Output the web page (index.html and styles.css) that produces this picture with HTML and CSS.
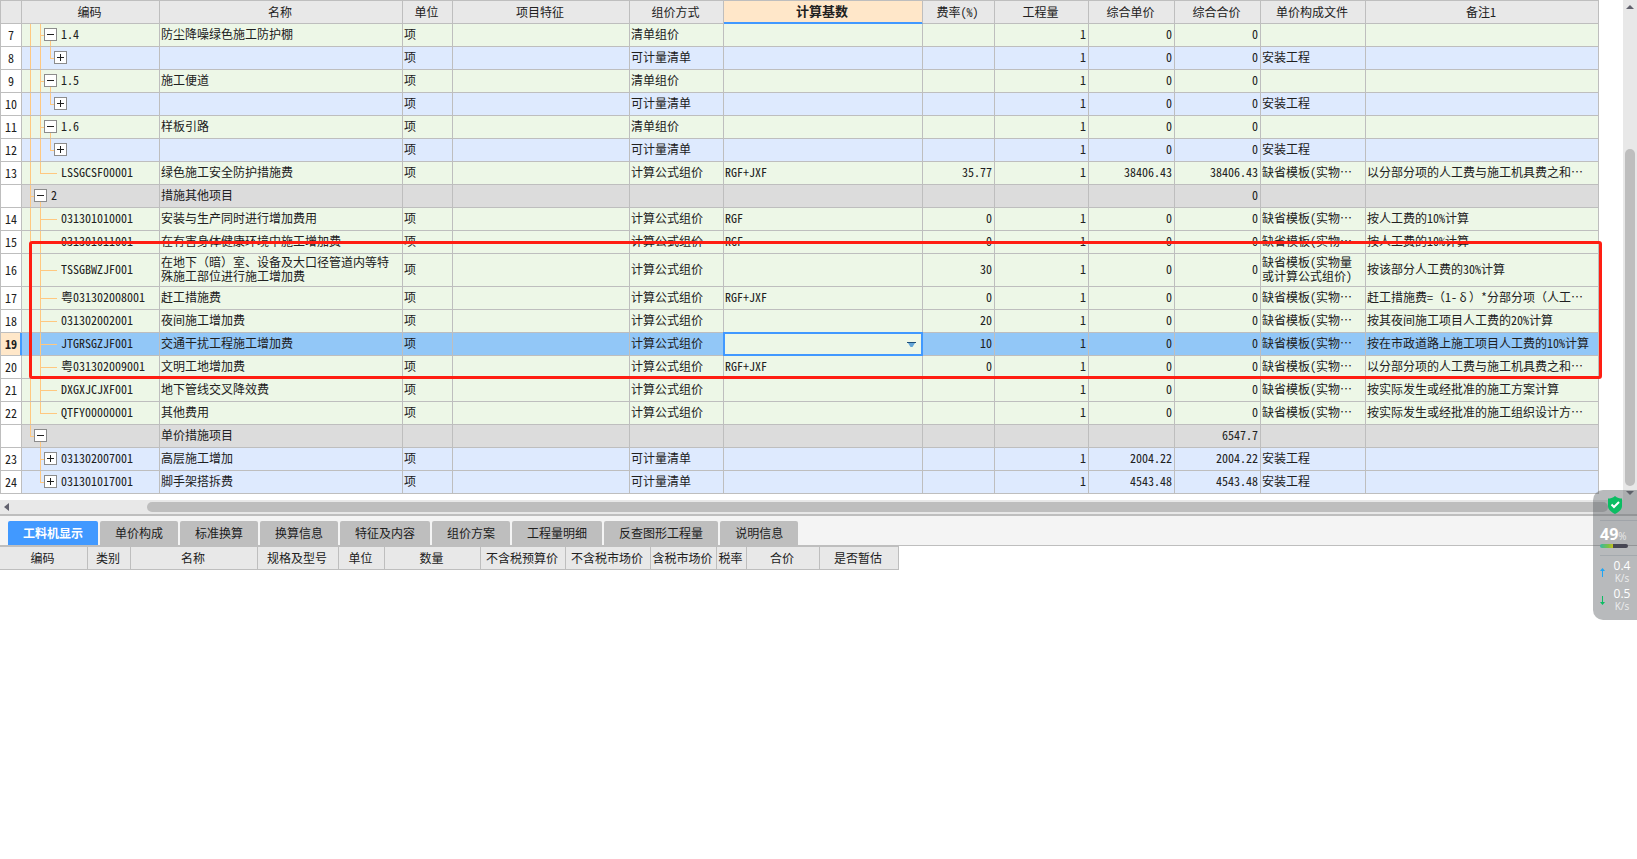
FILE: index.html
```html
<!DOCTYPE html>
<html lang="zh-CN">
<head>
<meta charset="utf-8">
<title>措施项目</title>
<link rel="stylesheet" href="styles.css">
</head>
<body>
<main class="app">
  <section class="upper">
    <div class="sheet">
      <div class="grid-wrap">
        <table class="grid">
          <colgroup>
            <col class="c-no"><col class="c-code"><col class="c-name"><col class="c-unit"><col class="c-feature"><col class="c-mode"><col class="c-base"><col class="c-rate"><col class="c-qty"><col class="c-price"><col class="c-price"><col class="c-file"><col class="c-note">
          </colgroup>
          <thead>
            <tr><th></th><th>编码</th><th>名称</th><th>单位</th><th>项目特征</th><th>组价方式</th><th class="current">计算基数</th><th>费率(%)</th><th>工程量</th><th>综合单价</th><th>综合合价</th><th>单价构成文件</th><th>备注1</th></tr>
          </thead>
          <tbody>
            <tr class="green"><th>7</th><td class="code"><div class="tree"><i class="line"></i><i class="tee"></i><span class="node open"><button class="toggle minus" aria-label="折叠"></button></span><span class="label">1.4</span></div></td><td>防尘降噪绿色施工防护棚</td><td>项</td><td></td><td>清单组价</td><td></td><td class="num"></td><td class="num">1</td><td class="num">0</td><td class="num">0</td><td></td><td></td></tr>
            <tr class="blue"><th>8</th><td class="code"><div class="tree"><i class="line"></i><i class="line"></i><i class="end"></i><span class="node"><button class="toggle plus" aria-label="展开"></button></span></div></td><td></td><td>项</td><td></td><td>可计量清单</td><td></td><td class="num"></td><td class="num">1</td><td class="num">0</td><td class="num">0</td><td>安装工程</td><td></td></tr>
            <tr class="green"><th>9</th><td class="code"><div class="tree"><i class="line"></i><i class="tee"></i><span class="node open"><button class="toggle minus" aria-label="折叠"></button></span><span class="label">1.5</span></div></td><td>施工便道</td><td>项</td><td></td><td>清单组价</td><td></td><td class="num"></td><td class="num">1</td><td class="num">0</td><td class="num">0</td><td></td><td></td></tr>
            <tr class="blue"><th>10</th><td class="code"><div class="tree"><i class="line"></i><i class="line"></i><i class="end"></i><span class="node"><button class="toggle plus" aria-label="展开"></button></span></div></td><td></td><td>项</td><td></td><td>可计量清单</td><td></td><td class="num"></td><td class="num">1</td><td class="num">0</td><td class="num">0</td><td>安装工程</td><td></td></tr>
            <tr class="green"><th>11</th><td class="code"><div class="tree"><i class="line"></i><i class="tee"></i><span class="node open"><button class="toggle minus" aria-label="折叠"></button></span><span class="label">1.6</span></div></td><td>样板引路</td><td>项</td><td></td><td>清单组价</td><td></td><td class="num"></td><td class="num">1</td><td class="num">0</td><td class="num">0</td><td></td><td></td></tr>
            <tr class="blue"><th>12</th><td class="code"><div class="tree"><i class="line"></i><i class="line"></i><i class="end"></i><span class="node"><button class="toggle plus" aria-label="展开"></button></span></div></td><td></td><td>项</td><td></td><td>可计量清单</td><td></td><td class="num"></td><td class="num">1</td><td class="num">0</td><td class="num">0</td><td>安装工程</td><td></td></tr>
            <tr class="green"><th>13</th><td class="code"><div class="tree"><i class="line"></i><i class="end"></i><span class="node leaf"></span><span class="label">LSSGCSF00001</span></div></td><td>绿色施工安全防护措施费</td><td>项</td><td></td><td>计算公式组价</td><td>RGF+JXF</td><td class="num">35.77</td><td class="num">1</td><td class="num">38406.43</td><td class="num">38406.43</td><td>缺省模板(实物…</td><td>以分部分项的人工费与施工机具费之和…</td></tr>
            <tr class="gray"><th></th><td class="code"><div class="tree"><i class="tee"></i><span class="node open"><button class="toggle minus" aria-label="折叠"></button></span><span class="label">2</span></div></td><td>措施其他项目</td><td></td><td></td><td></td><td></td><td class="num"></td><td class="num"></td><td class="num"></td><td class="num">0</td><td></td><td></td></tr>
            <tr class="green"><th>14</th><td class="code"><div class="tree"><i class="line"></i><i class="tee"></i><span class="node leaf"></span><span class="label">031301010001</span></div></td><td>安装与生产同时进行增加费用</td><td>项</td><td></td><td>计算公式组价</td><td>RGF</td><td class="num">0</td><td class="num">1</td><td class="num">0</td><td class="num">0</td><td>缺省模板(实物…</td><td>按人工费的10%计算</td></tr>
            <tr class="green"><th>15</th><td class="code"><div class="tree"><i class="line"></i><i class="tee"></i><span class="node leaf"></span><span class="label">031301011001</span></div></td><td>在有害身体健康环境中施工增加费</td><td>项</td><td></td><td>计算公式组价</td><td>RGF</td><td class="num">0</td><td class="num">1</td><td class="num">0</td><td class="num">0</td><td>缺省模板(实物…</td><td>按人工费的10%计算</td></tr>
            <tr class="green tall"><th>16</th><td class="code"><div class="tree"><i class="line"></i><i class="tee"></i><span class="node leaf"></span><span class="label">TSSGBWZJF001</span></div></td><td>在地下（暗）室、设备及大口径管道内等特<br>殊施工部位进行施工增加费</td><td>项</td><td></td><td>计算公式组价</td><td></td><td class="num">30</td><td class="num">1</td><td class="num">0</td><td class="num">0</td><td>缺省模板(实物量<br>或计算公式组价)</td><td>按该部分人工费的30%计算</td></tr>
            <tr class="green"><th>17</th><td class="code"><div class="tree"><i class="line"></i><i class="tee"></i><span class="node leaf"></span><span class="label">粤031302008001</span></div></td><td>赶工措施费</td><td>项</td><td></td><td>计算公式组价</td><td>RGF+JXF</td><td class="num">0</td><td class="num">1</td><td class="num">0</td><td class="num">0</td><td>缺省模板(实物…</td><td>赶工措施费=（1-<span class="wide">δ</span>）*分部分项（人工…</td></tr>
            <tr class="green"><th>18</th><td class="code"><div class="tree"><i class="line"></i><i class="tee"></i><span class="node leaf"></span><span class="label">031302002001</span></div></td><td>夜间施工增加费</td><td>项</td><td></td><td>计算公式组价</td><td></td><td class="num">20</td><td class="num">1</td><td class="num">0</td><td class="num">0</td><td>缺省模板(实物…</td><td>按其夜间施工项目人工费的20%计算</td></tr>
            <tr class="selected"><th>19</th><td class="code"><div class="tree"><i class="line"></i><i class="tee"></i><span class="node leaf"></span><span class="label">JTGRSGZJF001</span></div></td><td>交通干扰工程施工增加费</td><td>项</td><td></td><td>计算公式组价</td><td class="editing"><div class="combo"><select aria-label="计算基数"><option></option><option>RGF</option><option>RGF+JXF</option></select><svg class="combo-arrow" viewBox="0 0 9 6" width="9" height="6"><path d="M0 0h9v1H0z" fill="#1d4e79"/><path d="M1 1h7L5.500 5h-2z" fill="#62a5d8"/></svg></div></td><td class="num">10</td><td class="num">1</td><td class="num">0</td><td class="num">0</td><td>缺省模板(实物…</td><td>按在市政道路上施工项目人工费的10%计算</td></tr>
            <tr class="green"><th>20</th><td class="code"><div class="tree"><i class="line"></i><i class="tee"></i><span class="node leaf"></span><span class="label">粤031302009001</span></div></td><td>文明工地增加费</td><td>项</td><td></td><td>计算公式组价</td><td>RGF+JXF</td><td class="num">0</td><td class="num">1</td><td class="num">0</td><td class="num">0</td><td>缺省模板(实物…</td><td>以分部分项的人工费与施工机具费之和…</td></tr>
            <tr class="green"><th>21</th><td class="code"><div class="tree"><i class="line"></i><i class="tee"></i><span class="node leaf"></span><span class="label">DXGXJCJXF001</span></div></td><td>地下管线交叉降效费</td><td>项</td><td></td><td>计算公式组价</td><td></td><td class="num"></td><td class="num">1</td><td class="num">0</td><td class="num">0</td><td>缺省模板(实物…</td><td>按实际发生或经批准的施工方案计算</td></tr>
            <tr class="green"><th>22</th><td class="code"><div class="tree"><i class="line"></i><i class="end"></i><span class="node leaf"></span><span class="label">QTFY00000001</span></div></td><td>其他费用</td><td>项</td><td></td><td>计算公式组价</td><td></td><td class="num"></td><td class="num">1</td><td class="num">0</td><td class="num">0</td><td>缺省模板(实物…</td><td>按实际发生或经批准的施工组织设计方…</td></tr>
            <tr class="gray"><th></th><td class="code"><div class="tree"><i class="end"></i><span class="node open"><button class="toggle minus" aria-label="折叠"></button></span></div></td><td>单价措施项目</td><td></td><td></td><td></td><td></td><td class="num"></td><td class="num"></td><td class="num"></td><td class="num">6547.7</td><td></td><td></td></tr>
            <tr class="blue"><th>23</th><td class="code"><div class="tree"><i></i><i class="tee"></i><span class="node"><button class="toggle plus" aria-label="展开"></button></span><span class="label">031302007001</span></div></td><td>高层施工增加</td><td>项</td><td></td><td>可计量清单</td><td></td><td class="num"></td><td class="num">1</td><td class="num">2004.22</td><td class="num">2004.22</td><td>安装工程</td><td></td></tr>
            <tr class="blue"><th>24</th><td class="code"><div class="tree"><i></i><i class="end"></i><span class="node"><button class="toggle plus" aria-label="展开"></button></span><span class="label">031301017001</span></div></td><td>脚手架搭拆费</td><td>项</td><td></td><td>可计量清单</td><td></td><td class="num"></td><td class="num">1</td><td class="num">4543.48</td><td class="num">4543.48</td><td>安装工程</td><td></td></tr>
          </tbody>
        </table>
        <div class="marker"></div>
      </div>
      <div class="hscroll">
        <svg viewBox="0 0 5 8" width="5" height="8"><path d="M5 0v8L0 4z" fill="#62626e"/></svg>
        <div class="thumb"></div>
        <svg viewBox="0 0 5 8" width="5" height="8"><path d="M0 0v8l5-4z" fill="#62626e"/></svg>
      </div>
    </div>
    <div class="vscroll">
      <svg viewBox="0 0 8 4" width="8" height="4"><path d="M0 4h8L4 0z" fill="#62626e"/></svg>
      <div class="thumb"></div>
      <svg viewBox="0 0 8 4" width="8" height="4"><path d="M0 0h8L4 4z" fill="#62626e"/></svg>
    </div>
  </section>

  <section class="lower">
    <nav class="tabs">
      <button class="tab active">工料机显示</button>
      <button class="tab">单价构成</button>
      <button class="tab">标准换算</button>
      <button class="tab">换算信息</button>
      <button class="tab">特征及内容</button>
      <button class="tab">组价方案</button>
      <button class="tab">工程量明细</button>
      <button class="tab">反查图形工程量</button>
      <button class="tab">说明信息</button>
    </nav>
    <table class="detail">
      <colgroup>
        <col class="d-code"><col class="d-kind"><col class="d-name"><col class="d-spec"><col class="d-unit"><col class="d-count"><col class="d-cost"><col class="d-cost"><col class="d-market"><col class="d-tax"><col class="d-total"><col class="d-flag">
      </colgroup>
      <thead>
        <tr><th>编码</th><th>类别</th><th>名称</th><th>规格及型号</th><th>单位</th><th>数量</th><th>不含税预算价</th><th>不含税市场价</th><th>含税市场价</th><th>税率</th><th>合价</th><th>是否暂估</th></tr>
      </thead>
    </table>
  </section>

  <aside class="monitor">
    <svg class="shield" viewBox="0 0 16 18" width="16" height="18"><path d="M8 0c2 2 5 2.500 7 2.500V10c0 4-4 6.500-7 8-3-1.500-7-4-7-8V2.500C3 2.500 6 2 8 0z" fill="#0bbd63"/><path d="M4.500 8.500l2.500 2.500 5-5" fill="none" stroke="#fff" stroke-width="2"/></svg>
    <div class="usage"><div class="percent"><b>49</b><small>%</small></div><div class="bar"></div></div>
    <div class="speed">
      <svg viewBox="0 0 5 9" width="5" height="9"><path d="M2 9V3H0l2.500-3L5 3H3v6z" fill="#1ea5f5"/></svg>
      <div>0.4<small>K/s</small></div>
    </div>
    <div class="speed">
      <svg viewBox="0 0 5 9" width="5" height="9"><path d="M2 0v6H0l2.500 3L5 6H3V0z" fill="#0bbd63"/></svg>
      <div>0.5<small>K/s</small></div>
    </div>
  </aside>
</main>
</body>
</html>
```
FILE: styles.css
```css
* { box-sizing: border-box; }

body {
  margin: 0;
  background: #fff;
  color: #202020;
  font: 12px/14px "Noto Sans Mono CJK SC", "Liberation Serif", "Noto Sans CJK SC", sans-serif;
}

button, select { font: inherit; color: inherit; }

.app { position: relative; min-height: 100vh; }

/* upper pane */
.upper { display: flex; border-bottom: 2px solid #bebebe; }
.sheet { flex: 1; min-width: 0; }
.grid-wrap { position: relative; padding: 0 24px 6px 0; }

table { border-collapse: separate; border-spacing: 0; table-layout: fixed; }

.grid { width: 100%; border-top: 1px solid #bebebe; border-left: 1px solid #bebebe; }
.c-no { width: 21px; }
.c-code { width: 138px; }
.c-name { width: 243px; }
.c-unit { width: 50px; }
.c-feature { width: 177px; }
.c-mode, .c-qty { width: 94px; }
.c-base { width: 199px; }
.c-rate { width: 72px; }
.c-price { width: 86px; }
.c-file { width: 105px; }

th, td {
  height: 23px;
  padding: 0 1px 2px;
  border-right: 1px solid #bebebe;
  border-bottom: 1px solid #bebebe;
  font-weight: 400;
  white-space: nowrap;
  text-align: left;
}
th { padding: 0; text-align: center; }
thead th { padding-right: 2px; background: #e8e8e8; }
thead .current {
  padding-bottom: 2px;
  background: #ffe7c9;
  border-bottom-color: #4199ff;
  box-shadow: inset 0 -1px #4199ff;
  font-size: 13px;
  font-weight: 700;
}
.num { padding-right: 2px; text-align: right; }

.green td { background: #edf7e7; }
.blue td { background: #deeafe; }
.gray td { background: #dcdcdc; }
.selected td { background: #92c7f7; }
.selected th {
  background: #ffe7c9;
  box-shadow: inset -1px 0 #4199ff;
  border-right-color: #4199ff;
  font-weight: 700;
}
.tall td, .tall th { height: 33px; }
.wide { display: inline-block; width: 12px; text-align: center; }

/* tree column */
.grid .code { padding: 0 0 0 2px; }
.tree { display: flex; height: 22px; align-items: center; }
.tall .tree { height: 32px; }
.tree i, .node { height: 100%; background-repeat: no-repeat; }
.tree i { width: 10px; }
.line {
  background-image: linear-gradient(#ffc880, #ffc880);
  background-size: 1px 100%;
  background-position: 6px 0;
}
.tee, .end {
  background-image: linear-gradient(#ffc880, #ffc880), linear-gradient(#ffc880, #ffc880);
  background-position: 6px 0, 6px 50%;
}
.tee { background-size: 1px 100%, 4px 1px; }
.end { background-size: 1px 50%, 4px 1px; }
.node { display: flex; width: 13px; align-items: center; padding-bottom: 1px; }
.open {
  background-image: linear-gradient(#ffc880, #ffc880);
  background-size: 1px 50%;
  background-position: 6px 100%;
}
.leaf {
  background-image: linear-gradient(#ffc880, #ffc880);
  background-size: 100% 1px;
  background-position: 0 50%;
}
.label { padding: 0 0 2px 4px; }
.toggle {
  width: 13px;
  height: 13px;
  padding: 0;
  border: 1px solid #8c8c8c;
  background: #fff center no-repeat;
}
.minus { background-image: linear-gradient(#202020, #202020); background-size: 7px 1px; }
.plus {
  background-image: linear-gradient(#202020, #202020), linear-gradient(#202020, #202020);
  background-size: 7px 1px, 1px 7px;
}

/* cell editor */
.grid .editing { padding: 0; }
.combo { position: relative; height: 22px; }
.combo select {
  display: block;
  width: 100%;
  height: 100%;
  padding: 0 2px;
  appearance: none;
  border: 1px solid #4199ff;
  border-radius: 0;
  background: #edf7e7;
  box-shadow: 0 0 0 1px #4199ff;
  outline: none;
}
.combo-arrow { position: absolute; right: 6px; top: 9px; }

/* highlighted block of rows */
.marker {
  position: absolute;
  top: 241px;
  right: 21px;
  left: 29px;
  height: 138px;
  border: 3px solid #ff1e12;
  border-radius: 3px;
  pointer-events: none;
}

/* scroll bars */
.hscroll, .vscroll { display: flex; align-items: center; background: #e8e8e8; }
.hscroll { height: 14px; padding: 0 4px; }
.hscroll .thumb { flex: 1; height: 10px; margin: 0 6px 0 138px; }
.vscroll { flex-direction: column; width: 14px; padding: 5px 0 19px; }
.vscroll .thumb { flex: 1; width: 10px; margin: 140px 0 5px; }
.thumb { border-radius: 5px; background: #bebebe; }

/* lower pane */
.tabs {
  display: flex;
  gap: 2px;
  padding: 5px 8px 0;
  border-bottom: 1px solid #bebebe;
  background: #f4f4f4;
}
.tab {
  height: 24px;
  padding: 0 15px;
  border: 0;
  border-radius: 2px 2px 0 0;
  background: #bebebe;
  font-family: "Noto Sans CJK SC", sans-serif;
}
.tab.active { background: #4199ff; color: #fff; font-weight: 700; }

.detail { border-top: 1px solid #bebebe; width: 899px; }
.d-code { width: 88px; }
.d-kind { width: 43px; }
.d-name { width: 127px; }
.d-spec { width: 81px; }
.d-unit { width: 46px; }
.d-count { width: 96px; }
.d-cost { width: 85px; }
.d-market { width: 66px; }
.d-tax { width: 30px; }
.d-total { width: 73px; }
.d-flag { width: 79px; }

/* floating system monitor */
.monitor {
  position: absolute;
  top: 490px;
  right: 0;
  width: 44px;
  height: 130px;
  padding: 6px 0 0 7px;
  border-radius: 10px 0 0 10px;
  background: rgba(90, 94, 100, .43);
  color: #fff;
  font-family: "Open Sans", sans-serif;
}
.shield { display: block; margin: 0 0 6px 7px; }
.usage { padding: 4px 0 7px; border: solid rgba(120, 130, 140, .3); border-width: 1px 0; }
.percent { display: flex; height: 19px; align-items: baseline; line-height: 18px; }
.percent b { font-size: 16px; }
.percent small { font-size: 10px; opacity: .7; }
.bar {
  width: 28px;
  height: 4px;
  border-radius: 2px;
  background: linear-gradient(90deg, #35b8a5, #7cc142 30%, #c5bd1e 47%, #474754 47%);
}
.speed { display: flex; gap: 4px; align-items: center; padding-top: 4px; }
.speed div { width: 26px; font-size: 12px; line-height: 12px; text-align: center; }
.speed small { display: block; font-size: 10px; opacity: .75; }
```
